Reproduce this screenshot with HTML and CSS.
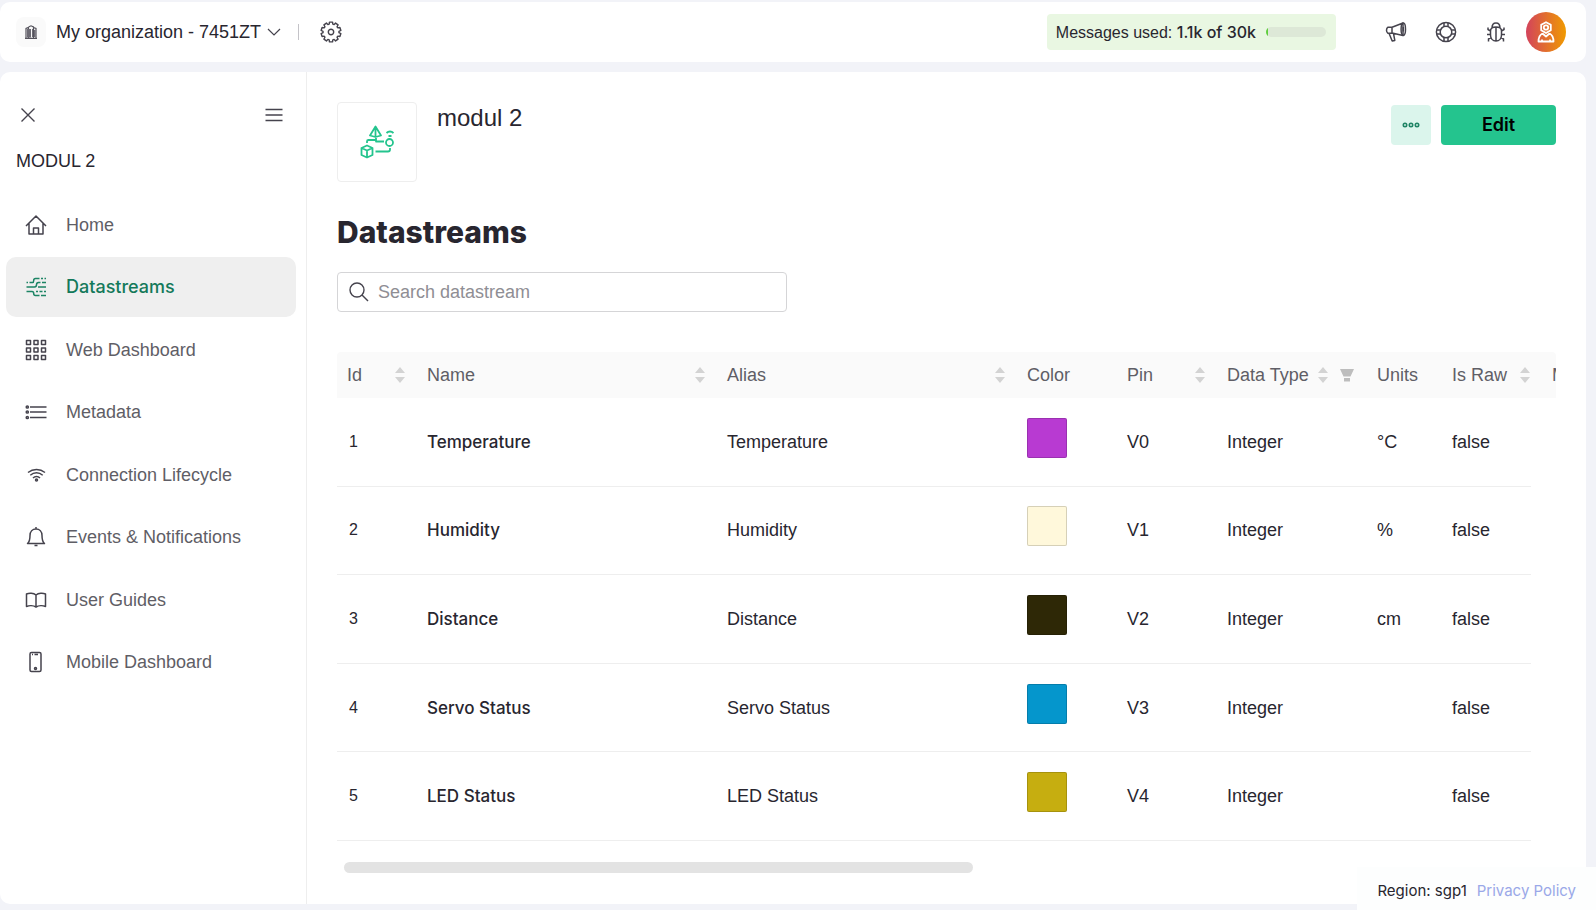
FILE: index.html
```html
<!DOCTYPE html>
<html lang="en">
<head>
<meta charset="utf-8">
<title>modul 2 – Datastreams</title>
<link rel="stylesheet" href="styles.css">
</head>
<body>
<svg class="defs" aria-hidden="true">
  <symbol id="sorter" viewBox="0 0 10 16"><path d="M0 6 5 0l5 6zM0 10h10l-5 6z" fill="#d3d3d3"/></symbol>
</svg>
<header class="topbar">
  <button class="org" type="button">
    <span class="org-logo"><svg width="14" height="14" viewBox="0 0 14 14"><path d="M1 13.300h12M2 13V3.500l2.500-1V13M4.500 2 7 .8 9.500 2v11M9.500 2.500l2.500 1V13" fill="none" stroke="#55535c" stroke-width="1.200"/><path d="M3 4h4v8.500H3zM8 4h1v8H8zM10 5h1.500v7H10z" fill="#6d6b74"/></svg></span>
    <span>My organization - 7451ZT</span>
    <svg class="chev" width="14" height="8" viewBox="0 0 14 8"><path d="M1 1l6 6 6-6" fill="none" stroke="#45434d" stroke-width="1.200"/></svg>
  </button>
  <span class="divider"></span>
  <button class="icon-btn" type="button" aria-label="Settings"><svg width="22" height="22" viewBox="-11 -11 22 22" fill="none" stroke="#45434d" stroke-width="1.400" stroke-linejoin="round"><path d="M-1.560-9.880h3.120L1.800-7.800l1.330.44L4.540-8.910 7.070-7.070 6.040-5.250l.82 1.130 2.050-.42.97 2.980L7.970-.7V.7l1.910.86-.97 2.980-2.050-.42-.82 1.130 1.030 1.820-2.530 1.840-1.410-1.550-1.330.44-.24 2.080h-3.120L-1.800 7.800l-1.330-.44-1.410 1.550-2.530-1.840 1.030-1.820-.82-1.130-2.050.42-.97-2.980L-7.970.7V-.7l-1.910-.86.97-2.980 2.050.42.82-1.130-1.030-1.820 2.530-1.840 1.410 1.550L-1.800-7.800z"/><circle r="2.700"/></svg></button>
  <div class="usage">
    <span>Messages used: <b>1.1k of 30k</b></span>
    <span class="meter"><span class="meter-fill"></span></span>
  </div>
  <nav class="tools">
    <button class="icon-btn" type="button" aria-label="What's new"><svg width="22" height="22" viewBox="0 0 22 22" fill="none" stroke="#45434d" stroke-width="1.500" stroke-linejoin="round"><path d="M3 6.200h4L18 2v12.500L7 12l-4 .3C1 11 1 7.500 3 6.200zM7 6.200V12M4 12.300l3.200 7.700 2.600-.6L8.500 12.500"/><ellipse cx="18.300" cy="8.200" rx="2.200" ry="6.200"/><path d="M18.300 6v4.500"/></svg></button>
    <button class="icon-btn" type="button" aria-label="Help"><svg width="22" height="22" viewBox="0 0 22 22" fill="none" stroke="#45434d" stroke-width="1.500"><circle cx="11" cy="11" r="9.600"/><circle cx="11" cy="11" r="5.800"/><path d="M9 1.500v4M13 1.500v4M9 16.500v4M13 16.500v4M1.500 9h4M1.500 13h4M16.500 9h4M16.500 13h4"/></svg></button>
    <button class="icon-btn" type="button" aria-label="Report a bug"><svg width="22" height="22" viewBox="0 0 22 22" fill="none" stroke="#45434d" stroke-width="1.500"><path d="M5.500 10C5.500 7.500 8 6 11 6s5.500 1.500 5.500 4v4c0 3.500-2.200 6-5.500 6s-5.500-2.500-5.500-6zM11 6v14M7 7c0-3.500 1.500-5 4-5s4 1.500 4 5M5.500 10 3 8.500V6.500M16.500 10 19 8.500V6.500M5.500 13.500H2M16.500 13.500H20M6 16.500 3.500 18v2.500M16 16.500l2.500 1.500v2.500"/></svg></button>
    <button class="avatar" type="button" aria-label="Account"><svg width="20" height="22" viewBox="0 0 20 22" fill="none" stroke="#fff" stroke-width="1.800" stroke-linejoin="round"><path d="m10 1.200 4.800 2.500v5.500L10 12 5.200 9.200V3.700z"/><circle cx="10" cy="6.500" r="2.200"/><path d="M6.500 12.500 10 15.500l3.500-3M6.500 12.500C3.500 14 2.500 16.500 2.500 20.500h15c0-4-1-6.500-4-8M6 20.500v-2M14 20.500v-2"/></svg></button>
  </nav>
</header>

<div class="shell">
  <aside class="sidebar">
    <div class="side-tools">
      <button class="icon-btn" type="button" aria-label="Close"><svg width="16" height="16" viewBox="0 0 16 16"><path d="m1.500 1.500 13 13m0-13-13 13" stroke="#45434d" stroke-width="1.400"/></svg></button>
      <button class="icon-btn" type="button" aria-label="Menu"><svg width="18" height="14" viewBox="0 0 18 14"><path d="M.5 1.500h17M.5 7h17M.5 12.500h17" stroke="#45434d" stroke-width="1.400"/></svg></button>
    </div>
    <h2 class="side-title">MODUL 2</h2>
    <nav class="menu">
      <a href="#home"><svg width="22" height="22" viewBox="0 0 22 22"><path d="M1 12 11 2l10 10M4 9.500V20h14V9.500M8.500 20v-6h5v6"/></svg>Home</a>
      <a class="active" href="#datastreams" aria-current="page"><svg width="22" height="22" viewBox="0 0 22 22"><path d="M1.500 6.500h1.500M4.500 6.500h3q1.200 0 1.200-2t1.800-2h4M16 2.500h2M19.500 2.500h1.500M1.500 11h8q2 0 2-2.200t2-2.300h2M17 6.500h4M13 11h8M1.500 15.500h5.500q1.700 0 1.700 2t1.800 2h4M11 15.500h2M14.500 15.500h3M19 15.500h2M16 19.500h5"/></svg>Datastreams</a>
      <a href="#web"><svg width="22" height="22" viewBox="0 0 22 22"><path d="M1.500 1.500h4v4h-4zM9 1.500h4v4H9zM16.500 1.500h4v4h-4zM1.500 9h4v4h-4zM9 9h4v4H9zM16.500 9h4v4h-4zM1.500 16.500h4v4h-4zM9 16.500h4v4H9zM16.500 16.500h4v4h-4z"/></svg>Web Dashboard</a>
      <a href="#metadata"><svg width="22" height="22" viewBox="0 0 22 22"><path d="M5 6h16.500M5 11h16.500M5 16.500h16.500"/><circle cx="2.300" cy="6" r="1.100"/><circle cx="2.300" cy="11" r="1.100"/><circle cx="2.300" cy="16.500" r="1.100"/></svg>Metadata</a>
      <a href="#lifecycle"><svg width="22" height="22" viewBox="0 0 22 22"><path d="M3 8.500c5-4 12-4 17 0M5.300 11.200c3.700-3.200 8.700-3.200 12.400 0M8 14c2-1.900 5-1.900 7 0"/><circle cx="11.500" cy="16" r="1"/></svg>Connection Lifecycle</a>
      <a href="#events"><svg width="22" height="22" viewBox="0 0 22 22"><path d="M2.500 17.500c2-1.500 2.500-4 2.500-8C5 5.500 7.500 3 11 3s6 2.500 6 6.500c0 4 .5 6.500 2.500 8zM11 1v2M9.500 19.500h3"/></svg>Events &amp; Notifications</a>
      <a href="#guides"><svg width="22" height="22" viewBox="0 0 22 22"><path d="M11 6C8.500 3.800 4 3.800 1.500 5v12.500C4 16.500 8.500 16.500 11 18c2.500-1.500 7-1.500 9.500-.5V5C18 3.800 13.500 3.800 11 6zv12"/></svg>User Guides</a>
      <a href="#mobile"><svg width="22" height="22" viewBox="0 0 22 22"><path d="M6.500 1.500h8q1.500 0 1.500 1.500v16q0 1.500-1.500 1.500h-8Q5 20.500 5 19V3q0-1.500 1.500-1.500zM7 3.500h1M9.500 3.500h3.500"/><circle cx="10.500" cy="17.500" r="1"/></svg>Mobile Dashboard</a>
    </nav>
  </aside>

  <main class="content">
    <div class="head">
      <div class="thumb"><svg width="34" height="34" viewBox="0 0 34 34" fill="none" stroke="#24c48e" stroke-width="1.800" stroke-linejoin="round"><path d="M15.500 1.500 10 10.500l5.500 1.500 5.500-1.500zV12M7 18v-1.500q0-1.500 1.500-1.500H16v-2M16 15v1.500h8M15.500 26.500H28q2 0 2-2V23M7 20.500l5.500 2.500v7L7 32.500 1.500 30v-7zM1.500 23 7 25.500l5.500-2.500M7 25.500v7M26.500 8c2-2 5-2 7 0M28.500 11h3"/><circle cx="29.500" cy="17.500" r="3.500"/></svg></div>
      <h1 class="title">modul 2</h1>
      <div class="actions">
        <button class="more" type="button" aria-label="More"><svg width="18" height="6" viewBox="0 0 18 6" fill="none" stroke="#1f8465" stroke-width="1.600"><circle cx="3" cy="3" r="1.700"/><circle cx="9" cy="3" r="1.700"/><circle cx="15" cy="3" r="1.700"/></svg></button>
        <button class="edit" type="button">Edit</button>
      </div>
    </div>
    <h2 class="section">Datastreams</h2>
    <label class="search">
      <svg width="20" height="20" viewBox="0 0 20 20" fill="none" stroke="#45434d" stroke-width="1.400"><circle cx="8" cy="8" r="7"/><path d="m13 13 6 6"/></svg>
      <input type="text" placeholder="Search datastream" aria-label="Search datastream">
    </label>

    <table class="grid">
      <thead>
        <tr>
          <th>Id<svg class="sort"><use href="#sorter"/></svg></th>
          <th>Name<svg class="sort"><use href="#sorter"/></svg></th>
          <th>Alias<svg class="sort"><use href="#sorter"/></svg></th>
          <th>Color</th>
          <th>Pin<svg class="sort"><use href="#sorter"/></svg></th>
          <th>Data Type<svg class="sort"><use href="#sorter"/></svg><svg class="filter" width="14" height="14" viewBox="0 0 14 14"><path d="M0 1h14l-3.500 7.500h-7zM4 10h6v3.500H4z" fill="#bdbdbd"/></svg></th>
          <th>Units</th>
          <th>Is Raw<svg class="sort"><use href="#sorter"/></svg></th>
          <th>Min</th>
        </tr>
      </thead>
      <tbody>
        <tr><td>1</td><td>Temperature</td><td>Temperature</td><td><span class="swatch purple"></span></td><td>V0</td><td>Integer</td><td>°C</td><td>false</td></tr>
        <tr><td>2</td><td>Humidity</td><td>Humidity</td><td><span class="swatch cream"></span></td><td>V1</td><td>Integer</td><td>%</td><td>false</td></tr>
        <tr><td>3</td><td>Distance</td><td>Distance</td><td><span class="swatch dark"></span></td><td>V2</td><td>Integer</td><td>cm</td><td>false</td></tr>
        <tr><td>4</td><td>Servo Status</td><td>Servo Status</td><td><span class="swatch blue"></span></td><td>V3</td><td>Integer</td><td></td><td>false</td></tr>
        <tr><td>5</td><td>LED Status</td><td>LED Status</td><td><span class="swatch gold"></span></td><td>V4</td><td>Integer</td><td></td><td>false</td></tr>
      </tbody>
    </table>
    <div class="track"><div class="thumb-bar"></div></div>
  </main>
</div>

<footer class="region"><span>Region: sgp1</span><a href="#privacy">Privacy Policy</a></footer>
</body>
</html>
```

FILE: styles.css
```css
* { box-sizing: border-box; }
body {
  margin: 0;
  min-height: 100vh;
  display: flex;
  flex-direction: column;
  gap: 10px;
  padding: 2px 10px 6px 0;
  background: #f2f3f8;
  color: #28262f;
  font: 18px/24px "Liberation Sans", Arial, sans-serif;
}
button, input { font: inherit; color: inherit; }
button { border: 0; padding: 0; background: none; cursor: pointer; }
h1, h2 { margin: 0; }
svg { display: block; flex: none; }
.defs { position: absolute; width: 0; height: 0; }

.topbar {
  display: flex;
  align-items: center;
  height: 60px;
  padding: 0 20px 0 16px;
  background: #fff;
  border-radius: 10px;
}
.org { display: flex; align-items: center; white-space: nowrap; }
.org-logo {
  display: grid;
  place-items: center;
  width: 30px;
  height: 30px;
  margin-right: 10px;
  border-radius: 8px;
  background: #fafafa;
}
.chev { margin-left: 6px; }
.divider { width: 1px; height: 16px; margin: 0 21px 0 17px; background: #c4c3c8; }
.usage {
  display: flex;
  align-items: center;
  gap: 10px;
  height: 36px;
  margin-left: auto;
  padding: 0 10px 0 9px;
  border-radius: 4px;
  background: #e9f7e2;
  font-size: 16px;
  white-space: nowrap;
}
.usage b { font: 500 16px/24px Inter, sans-serif; }
.meter { width: 60px; height: 10px; border-radius: 5px; overflow: hidden; background: #dde8d7; }
.meter-fill { display: block; width: 2px; height: 10px; background: #5fcf3c; }
.tools { display: flex; align-items: center; gap: 28px; margin-left: 49px; }
.avatar {
  display: grid;
  place-items: center;
  width: 40px;
  height: 40px;
  margin-left: -9px;
  border-radius: 50%;
  background: linear-gradient(90deg, #d3435c, #f09a00);
}

.shell {
  flex: 1;
  display: flex;
  background: #fff;
  border-radius: 10px;
}
.sidebar { flex: none; width: 307px; border-right: 1px solid #eee; padding: 35px 10px 0 6px; }
.side-tools { display: flex; justify-content: space-between; align-items: center; padding: 0 13px 0 14px; }
.side-title { margin: 26px 0 0 10px; font-size: 18px; font-weight: 400; }
.menu { display: grid; align-content: space-between; min-height: 497px; margin-top: 22px; }
.menu a {
  display: flex;
  align-items: center;
  gap: 19px;
  height: 60px;
  padding-left: 19px;
  border-radius: 10px;
  color: #5f5e66;
  text-decoration: none;
}
.menu svg { fill: none; stroke: #45434d; stroke-width: 1.500; stroke-linejoin: round; }
.menu .active { background: #efefef; color: #14795a; font-family: Inter, sans-serif; font-weight: 500; }
.menu .active svg { stroke: #1c8464; }

.content { flex: 1; min-width: 0; padding: 30px; }
.head { display: flex; align-items: flex-start; }
.thumb {
  display: grid;
  place-items: center;
  width: 80px;
  height: 80px;
  border: 1px solid #eee;
  border-radius: 4px;
}
.title { margin-left: 20px; font-size: 24px; line-height: 32px; font-weight: 400; }
.actions { display: flex; gap: 10px; margin: 3px 0 0 auto; }
.more { display: grid; place-items: center; width: 40px; height: 40px; border-radius: 4px; background: #dbf5ec; }
.edit { width: 115px; height: 40px; border-radius: 4px; background: #24c48e; color: #000; font-family: Inter, sans-serif; font-weight: 600; }
.section { margin-top: 30px; font: 800 30px/40px Inter, sans-serif; }
.search {
  display: flex;
  align-items: center;
  gap: 9px;
  width: 450px;
  height: 40px;
  margin-top: 20px;
  padding: 0 11px;
  border: 1px solid #d5d5d7;
  border-radius: 4px;
}
.search input { flex: 1; min-width: 0; border: 0; outline: 0; padding: 0; background: none; }
.search input::placeholder { color: #8f8e94; }

.grid { display: block; margin-top: 40px; }
.grid thead { display: block; overflow: hidden; border-radius: 4px 4px 0 0; background: #fafafa; }
.grid tbody { display: grid; grid-auto-rows: 1fr; min-height: 443px; margin-right: 25px; overflow: hidden; }
.grid tr {
  display: grid;
  grid-template-columns: 80px 300px 300px 100px 100px 150px 75px 100px 100px;
  align-items: center;
}
.grid thead tr { height: 46px; }
.grid tbody tr { border-bottom: 1px solid #eee; }
.grid th, .grid td { padding: 0 10px; text-align: left; font-weight: 400; white-space: nowrap; }
.grid th { display: flex; align-items: center; color: #5f5e66; }
.grid td:nth-child(1) { padding-left: 12px; font-size: 16px; }
.grid td:nth-child(2) { font: 500 17px/24px Inter, sans-serif; }
.sort { width: 10px; height: 16px; margin: 0 2px 0 auto; }
.filter { margin: 0 3px 0 10px; }
.swatch { display: block; width: 40px; height: 40px; margin-bottom: 8px; border: 1px solid rgb(0 0 0 / 16%); border-radius: 2px; }
.purple { background: #b83ad2; }
.cream { background: #fff8db; }
.dark { background: #2e2806; }
.blue { background: #0596cc; }
.gold { background: #c6ae10; }

.track { margin: 21px 25px 0 7px; }
.thumb-bar { width: 53%; height: 11px; border-radius: 6px; background: #e3e3e3; }

.region {
  position: fixed;
  right: 0;
  bottom: 0;
  display: flex;
  gap: 10px;
  height: 43px;
  padding: 12px 20px 0;
  background: #fdfefe;
  font: 15px/24px Inter, sans-serif;
}
.region a { color: #9aa8e8; text-decoration: none; }
```
